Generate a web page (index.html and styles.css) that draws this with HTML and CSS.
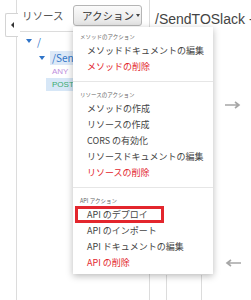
FILE: index.html
```html
<!DOCTYPE html>
<html lang="ja">
<head>
  <meta charset="UTF-8">
  <title>API Gateway - リソース</title>
  <link rel="stylesheet" href="styles.css">
</head>
<body>
  <div class="page">
    <div class="gutter">
      <div class="collapse-tab"><span class="tab-arrow"></span></div>
    </div>

    <div class="resources">
      <div class="resources-header">
        <span class="resources-title">リソース</span>
        <div class="actions">
          <button class="actions-btn">アクション<span class="caret"></span></button>

          <!-- dropdown menu -->
          <div class="menu">
            <div class="menu-section">
              <div class="menu-heading">メソッドのアクション</div>
              <div class="menu-item">メソッドドキュメントの編集</div>
              <div class="menu-item danger">メソッドの削除</div>
            </div>
            <div class="menu-section">
              <div class="menu-heading">リソースのアクション</div>
              <div class="menu-item">メソッドの作成</div>
              <div class="menu-item">リソースの作成</div>
              <div class="menu-item">CORS の有効化</div>
              <div class="menu-item">リソースドキュメントの編集</div>
              <div class="menu-item danger">リソースの削除</div>
            </div>
            <div class="menu-section">
              <div class="menu-heading">API アクション</div>
              <div class="menu-item"><span class="marked">API のデプロイ</span></div>
              <div class="menu-item">API のインポート</div>
              <div class="menu-item">API ドキュメントの編集</div>
              <div class="menu-item danger">API の削除</div>
            </div>
          </div>
        </div>
      </div>

      <div class="tree">
        <div class="tree-row level-0"><span class="toggle"></span><span class="path">/</span></div>
        <div class="tree-row level-1 selected-parent"><span class="toggle"></span><span class="path">/Send</span></div>
        <div class="method-row any">ANY</div>
        <div class="method-row post selected">POST</div>
      </div>
    </div>

    <div class="detail">
      <div class="detail-title">/SendTOSlack - POST - メソッドの実行</div>

      <div class="flow-line line-a"></div>
      <div class="flow-line line-b"></div>
      <svg class="flow-arrow arrow-right" width="16" height="8" viewBox="0 0 16 8">
        <path d="M0 4H14M10 1L14 4L10 7" fill="none" stroke="#a6a6a6" stroke-width="1.6"/>
      </svg>
      <svg class="flow-arrow arrow-left" width="16" height="8" viewBox="0 0 16 8">
        <path d="M16 4H2M6 1L2 4L6 7" fill="none" stroke="#a6a6a6" stroke-width="1.6"/>
      </svg>
    </div>
  </div>
</body>
</html>
```

FILE: styles.css
```css
body {
  margin: 0;
  font-family: "Noto Sans CJK JP", "Noto Sans", sans-serif;
  color: #333;
  background: #fff;
  overflow: hidden;
}
.page {
  display: flex;
  height: 300px;
}
.gutter {
  width: 16px;
  border-right: 1px solid #dcdcdc;
  position: relative;
  flex-shrink: 0;
}
.collapse-tab {
  position: absolute;
  left: 5px;
  top: 13px;
  width: 12px;
  height: 22px;
  background: #fff;
  border: 1px solid #d4d4d4;
  border-right: none;
  border-radius: 2px 0 0 2px;
  display: flex;
  align-items: center;
  justify-content: center;
}
.tab-arrow {
  width: 0;
  height: 0;
  border-top: 3px solid transparent;
  border-bottom: 3px solid transparent;
  border-right: 3px solid #333;
}
.resources {
  width: 132px;
  border-right: 1px solid #dcdcdc;
  flex-shrink: 0;
}
.resources-header {
  display: flex;
  align-items: center;
  justify-content: space-between;
  margin-left: 3px;
  padding: 5px 7px 5px 2px;
  border-bottom: 1px solid #dcdcdc;
}
.resources-title {
  font-size: 10.5px;
  color: #555;
}
.actions {
  position: relative;
}
.actions-btn {
  display: flex;
  align-items: center;
  height: 21px;
  width: 69px;
  padding: 0 0 0 8px;
  font-family: inherit;
  font-size: 10.5px;
  color: #333;
  background: linear-gradient(#fbfbfb, #e4e4e4);
  border: 1px solid #b5b5b5;
  border-radius: 3px;
}
.caret {
  margin-left: 2px;
  width: 0;
  height: 0;
  border-left: 2px solid transparent;
  border-right: 2px solid transparent;
  border-top: 3px solid #444;
}
.menu {
  position: absolute;
  left: 0;
  top: 22px;
  width: 140px;
  background: #fff;
  box-shadow: 0 2px 7px rgba(0, 0, 0, 0.28);
  z-index: 10;
}
.menu-section {
  padding: 5px 0 6px;
}
.menu-section + .menu-section {
  border-top: 1px solid #e6e6e6;
  padding-top: 8px;
}
.menu-section:last-child {
  padding-bottom: 3px;
}
.menu-heading {
  height: 10px;
  line-height: 10px;
  padding-left: 7px;
  margin-bottom: 1px;
  font-size: 5.5px;
  color: #666;
  white-space: nowrap;
}
.menu-item {
  height: 16px;
  line-height: 16px;
  padding-left: 14px;
  font-size: 9px;
  color: #444;
  white-space: nowrap;
}
.menu-item.danger {
  color: #e3262d;
}
.marked {
  display: inline-block;
  vertical-align: top;
  margin: -1px 0 0 -12px;
  height: 11px;
  line-height: 11px;
  padding: 0 13px 0 9px;
  border: 3px solid #e3262d;
}
.tree {
  padding-top: 2px;
  font-size: 10px;
  color: #2f74c8;
}
.tree-row {
  display: flex;
  align-items: center;
  height: 14px;
  white-space: nowrap;
  overflow: hidden;
}
.level-0 {
  padding-left: 9px;
}
.level-1 {
  margin-top: 3px;
  padding-left: 22px;
}
.toggle {
  width: 0;
  height: 0;
  border-left: 3px solid transparent;
  border-right: 3px solid transparent;
  border-top: 4px solid #2f74c8;
  margin-right: 5px;
}
.selected-parent .path {
  background: #dde9f7;
  padding-left: 2px;
  flex: 1;
  line-height: 14px;
}
.method-row {
  height: 13px;
  line-height: 13px;
  margin-left: 29px;
  padding-left: 6px;
  font-family: "Liberation Sans", sans-serif;
  font-size: 8px;
}
.method-row.any {
  color: #c08fdd;
}
.method-row.post {
  color: #3bab70;
}
.method-row.selected {
  background: #d7e7f7;
}
.detail {
  flex: 1;
  position: relative;
  padding-left: 5px;
  overflow: hidden;
}
.detail-title {
  margin-top: 11px;
  font-family: "Liberation Sans", sans-serif;
  font-size: 14px;
  color: #444;
  white-space: nowrap;
}
.flow-line {
  position: absolute;
  top: 275px;
  bottom: 0;
  width: 1px;
  background: #dcdcdc;
}
.line-a {
  left: 16px;
}
.line-b {
  left: 51px;
}
.flow-arrow {
  position: absolute;
  left: 75px;
}
.arrow-right {
  top: 101px;
}
.arrow-left {
  top: 259px;
}
```
